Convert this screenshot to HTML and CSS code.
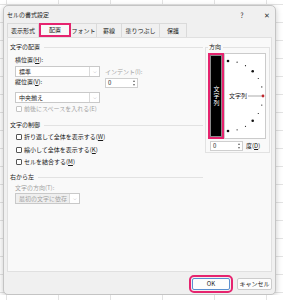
FILE: index.html
```html
<!DOCTYPE html>
<html lang="ja">
<head>
    <meta charset="UTF-8">
    <title>セルの書式設定</title>
    <link rel="stylesheet" href="styles.css">
</head>
<body>

<div class="dialog">
    <div class="titlebar">
        <span class="title">セルの書式設定</span>
        <span class="help">?</span>
        <span class="close">✕</span>
    </div>

    <div class="tabs">
        <div class="tab w32">表示形式</div>
        <div class="tab w32 active">配置</div>
        <div class="tab w26">フォント</div>
        <div class="tab w25">罫線</div>
        <div class="tab w38">塗りつぶし</div>
        <div class="tab w27">保護</div>
    </div>

    <div class="panel">
        <div class="left">
            <div class="head first"><span>文字の配置</span></div>

            <div class="align-row">
                <div class="col-main">
                    <div class="label">横位置(<u>H</u>):</div>
                    <div class="select"><span class="val">標準</span><span class="arrow">⌵</span></div>
                    <div class="label gap1">縦位置(<u>V</u>):</div>
                    <div class="select gap6"><span class="val">中央揃え</span><span class="arrow">⌵</span></div>
                </div>
                <div class="col-side">
                    <div class="label off">インデント(I):</div>
                    <div class="spin">
                        <span class="val">0</span>
                        <span class="spin-btns"><span class="up"></span><span class="down"></span></span>
                    </div>
                </div>
            </div>
            <div class="check off first-check"><span class="box"></span>前後にスペースを入れる(E)</div>

            <div class="head"><span>文字の制御</span></div>
            <div class="check c1"><span class="box"></span>折り返して全体を表示する(<u>W</u>)</div>
            <div class="check c2"><span class="box"></span>縮小して全体を表示する(<u>K</u>)</div>
            <div class="check c2"><span class="box"></span>セルを結合する(<u>M</u>)</div>

            <div class="head rtl"><span>右から左</span></div>
            <div class="label off dir-label">文字の方向(T):</div>
            <div class="select small off"><span class="val">最初の文字に依存</span><span class="arrow">⌵</span></div>
        </div>

        <div class="orient">
            <div class="orient-title">方向</div>
            <div class="orient-body">
                <div class="vbox"><span class="vtext">文字列</span></div>
                <div class="dial">
                    <svg width="40" height="84" viewBox="0 0 40 84">
                        <g fill="#111">
                            <circle cx="3" cy="7" r="1.3"/>
                            <circle cx="12.1" cy="8.2" r="0.6"/>
                            <circle cx="20.5" cy="11.7" r="0.6"/>
                            <circle cx="27.7" cy="17.3" r="1.3"/>
                            <circle cx="33.3" cy="24.5" r="0.6"/>
                            <circle cx="36.8" cy="32.9" r="0.6"/>
                            <circle cx="36.8" cy="51.1" r="0.6"/>
                            <circle cx="33.3" cy="59.5" r="0.6"/>
                            <circle cx="27.7" cy="66.7" r="1.3"/>
                            <circle cx="20.5" cy="72.3" r="0.6"/>
                            <circle cx="12.1" cy="75.8" r="0.6"/>
                            <circle cx="3" cy="77" r="1.3"/>
                        </g>
                        <line x1="23" y1="42" x2="38" y2="42" stroke="#888" stroke-width="0.7"/>
                        <circle cx="38" cy="42" r="1.4" fill="#c0262d"/>
                        <text x="4" y="44.2" class="dial-text">文字列</text>
                    </svg>
                </div>
            </div>
            <div class="deg-row">
                <div class="spin deg">
                    <span class="val">0</span>
                    <span class="spin-btns"><span class="up"></span><span class="down"></span></span>
                </div>
                <span class="deg-label">度(<u>D</u>)</span>
            </div>
        </div>
    </div>

    <div class="footer">
        <button class="btn ok">OK</button>
        <button class="btn">キャンセル</button>
    </div>
</div>

</body>
</html>
```

FILE: styles.css
```css
body {
    margin: 0;
    background-color: #ffffff;
    background-image:
        linear-gradient(to right, #e3e3e3 1px, transparent 1px),
        linear-gradient(to bottom, #e3e3e3 1px, transparent 1px);
    background-size: 52px 18px;
    background-position: 6px 4px;
    font-family: "Noto Sans CJK JP", "Noto Sans", sans-serif;
}
.dialog {
    width: 271px;
    height: 288px;
    margin: 5px 0 0 3px;
    border: 1px solid #c4c4c4;
    border-radius: 5px;
    background-color: #f0f0f0;
    box-shadow: 0 2px 6px rgba(0, 0, 0, 0.22);
    font-size: 6px;
    line-height: 8px;
    color: #1b1b1b;
    display: flex;
    flex-direction: column;
}
u {
    text-decoration: underline;
    text-underline-offset: 1px;
}

/* title bar */
.titlebar {
    height: 17px;
    display: flex;
    align-items: center;
    padding-left: 3px;
}
.title {
    flex: 1;
}
.help, .close {
    width: 16px;
    text-align: center;
    font-size: 7px;
    color: #333;
}
.close {
    margin-left: 9px;
}

/* tabs */
.tabs {
    height: 14px;
    display: flex;
    padding-left: 3px;
}
.tab {
    box-sizing: border-box;
    height: 14px;
    line-height: 14px;
    text-align: center;
    border: 1px solid #dadada;
    border-bottom: none;
    border-left: none;
    background-color: #f0f0f0;
}
.tab:first-child {
    border-left: 1px solid #dadada;
}
.tab.active {
    border: 2px solid #e6246f;
    background-color: #f9f9f9;
    line-height: 10px;
}
.w25 { width: 25px; }
.w26 { width: 26px; }
.w27 { width: 27px; }
.w32 { width: 32px; }
.w38 { width: 38px; }

/* content panel */
.panel {
    box-sizing: border-box;
    height: 235px;
    margin: 0 3px;
    border: 1px solid #e0e0e0;
    background-color: #f9f9f9;
    display: grid;
    grid-template-columns: 197px 65px;
}
.left {
    padding-left: 2px;
}
.head {
    display: flex;
    align-items: center;
    height: 8px;
    margin-top: 8px;
}
.head::after {
    content: "";
    flex: 1;
    height: 1px;
    margin-left: 4px;
    margin-right: 2px;
    background-color: #e2e2e2;
}
.head.first {
    margin-top: 5px;
}
.head.rtl {
    margin-top: 7px;
}
.label {
    height: 8px;
    padding-left: 5px;
}
.off {
    color: #a3a3a3;
}
.gap1 {
    margin-top: 1px;
}

.align-row {
    display: flex;
    margin-top: 5px;
}
.col-main {
    width: 95px;
}
.col-side {
    padding-top: 12px;
}
.col-side .label {
    padding-left: 0;
    white-space: nowrap;
}

.select {
    box-sizing: border-box;
    width: 85px;
    height: 11px;
    margin: 2px 0 0 5px;
    border: 1px solid #c9c9c9;
    background-color: #ffffff;
    display: flex;
    align-items: center;
}
.select.gap6 {
    margin-top: 6px;
}
.select .val {
    flex: 1;
    padding-left: 3px;
}
.select .arrow {
    box-sizing: border-box;
    width: 10px;
    height: 9px;
    border-left: 1px solid #dadada;
    text-align: center;
    font-size: 5px;
    line-height: 8px;
    color: #777;
}
.select.small {
    width: 65px;
    margin-top: 1px;
    background-color: #efefef;
}
.select.small .arrow {
    background-color: #ffffff;
}

.spin {
    box-sizing: border-box;
    width: 33px;
    height: 10px;
    margin-top: 2px;
    border: 1px solid #cfcfcf;
    background-color: #ffffff;
    display: flex;
    align-items: center;
}
.spin .val {
    flex: 1;
    padding-left: 2px;
}
.spin-btns {
    width: 7px;
    display: flex;
    flex-direction: column;
    align-items: center;
    gap: 2px;
}
.spin-btns .up,
.spin-btns .down {
    width: 0;
    height: 0;
    border-left: 1.5px solid transparent;
    border-right: 1.5px solid transparent;
}
.spin-btns .up {
    border-bottom: 2px solid #666;
}
.spin-btns .down {
    border-top: 2px solid #666;
}

.check {
    display: flex;
    align-items: center;
    height: 8px;
    padding-left: 6px;
}
.check .box {
    box-sizing: border-box;
    width: 6px;
    height: 6px;
    margin-right: 2px;
    border: 1px solid #555;
    border-radius: 1px;
    background-color: #ffffff;
}
.check.off .box {
    border-color: #c4c4c4;
}
.first-check {
    margin-top: 2px;
}
.c1 {
    margin-top: 4px;
}
.c2 {
    margin-top: 4.5px;
}
.dir-label {
    margin-top: 3px;
}

/* orientation group */
.orient {
    box-sizing: border-box;
    height: 106px;
    margin-top: 9px;
    border: 1px solid #e2e2e2;
    padding: 5px 0 0 2px;
}
.orient-title {
    height: 8px;
    margin: -10px 0 -3px 0;
    padding-left: 1px;
    width: 14px;
    background-color: #f9f9f9;
}
.orient-body {
    display: flex;
    margin-top: 5px;
}
.vbox {
    box-sizing: border-box;
    width: 16px;
    height: 86px;
    border: 2px solid #e6246f;
    background-color: #000000;
    box-shadow: inset 0 0 0 1px #8a8a8a;
    display: flex;
    align-items: center;
    justify-content: center;
}
.vtext {
    writing-mode: vertical-rl;
    color: #ffffff;
    font-size: 6px;
    letter-spacing: 1px;
}
.dial {
    box-sizing: border-box;
    width: 42px;
    height: 86px;
    border: 1px solid #cbcbcb;
    background-color: #ffffff;
}
.dial svg {
    display: block;
}
.dial-text {
    font-family: "Noto Sans CJK JP", sans-serif;
    font-size: 6px;
    fill: #1b1b1b;
}
.deg-row {
    display: flex;
    align-items: center;
    padding-left: 2px;
}
.deg-label {
    margin: 2px 0 0 3px;
}

/* footer */
.footer {
    display: flex;
    justify-content: flex-end;
    gap: 7px;
    padding: 6px 3px 0 0;
}
.btn {
    box-sizing: border-box;
    height: 12px;
    padding: 0;
    border: 1px solid #cccccc;
    border-radius: 2px;
    background-color: #fdfdfd;
    font-family: inherit;
    font-size: 6px;
    line-height: 10px;
    color: #1b1b1b;
}
.ok {
    width: 38px;
    border-color: #5a8fd0;
    outline: 2px solid #e6246f;
    outline-offset: 1px;
}
.btn:last-child {
    width: 35px;
}
```
